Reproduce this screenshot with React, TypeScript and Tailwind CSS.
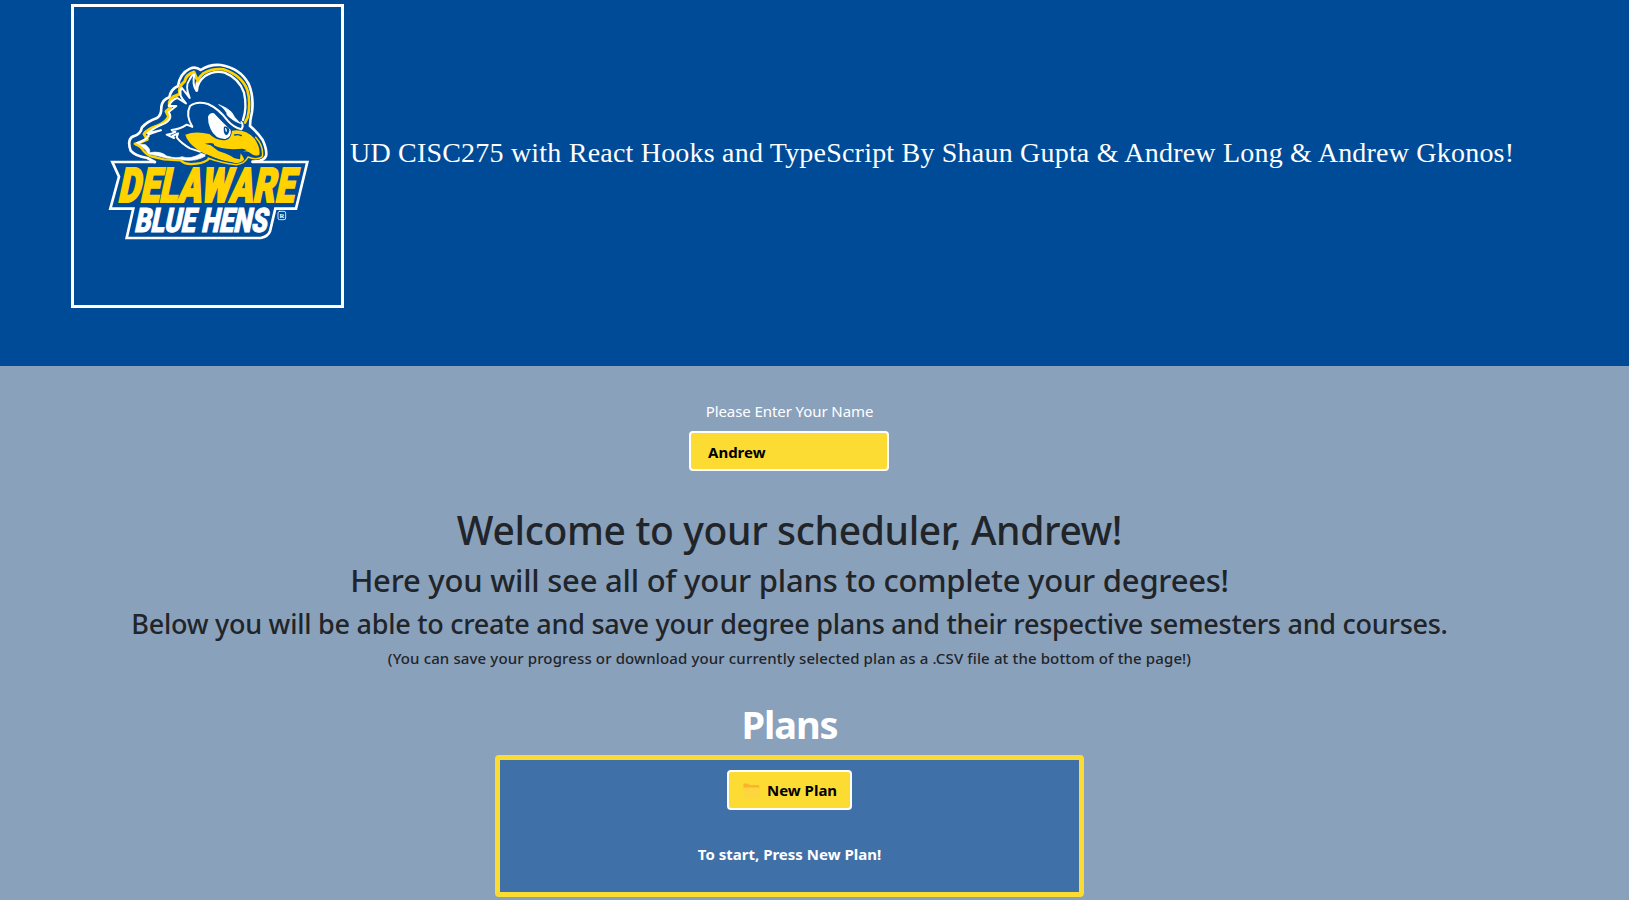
import { useState } from "react";

function Logo() {
  return (
    <svg viewBox="42 21 801 894" className="block h-full w-full overflow-visible" fill="none" strokeLinejoin="round" strokeLinecap="round">
      {/* outer contour of the head */}
      <path d="M284 486 L262 474 Q225 468 212 452 Q200 418 220 409 Q242 404 246 382 Q262 364 291 354 Q305 346 304 320 Q308 298 328 292 Q332 268 354 258 Q360 220 390 206 Q406 198 422 210 Q450 192 482 195 Q540 204 566 252 Q582 290 576 336 Q570 360 570 378 Q592 396 608 420 Q622 450 618 468 Q612 484 578 485" stroke="#fff" strokeWidth="8" />
      {/* crown */}
      <path d="M409 262 Q408 240 430 220 Q456 205 490 208 Q545 226 562 270 Q573 310 563 352 L555 368" stroke="#ffd200" strokeWidth="8" />
      <path d="M411 272 Q412 246 434 229 Q462 210 494 218 Q538 236 552 278 Q562 322 549 360" stroke="#fff" strokeWidth="7" />
      {/* feathers */}
      <path d="M228 432 L262 418 L252 402 Q262 388 291 378 Q316 368 326 350 L318 334 L332 322 Q320 308 340 290 L360 282 Q352 262 374 244 Q378 224 402 216 L410 236" stroke="#ffd200" strokeWidth="9" />
      <path d="M230 430 Q252 424 266 408 Q258 404 303 391 L262 400 Q280 384 314 370 Q340 356 326 336 L349 318 L326 318 Q336 298 352 294 L378 310 Q350 280 366 264 L389 294 Q374 258 388 240 Q398 222 403 224 Q396 252 409 272 L411 250" stroke="#fff" strokeWidth="6" />
      <path d="M226 431 L256 434 Q274 448 268 458 Q302 452 320 468 Q350 477 366 470 Q390 480 424 460 L440 466 Q410 486 368 480 L318 474 Q300 468 264 462 Q258 444 226 431Z" fill="#fff" stroke="#fff" strokeWidth="2" />
      <path d="M224 431 Q246 442 250 452 Q264 468 282 471 L312 478 L362 481 Q374 496 410 491 Q436 488 450 474" stroke="#ffd200" strokeWidth="7" />
      {/* cheek */}
      <path d="M396 380 L380 374 Q360 388 335 390 L346 396 Q336 402 320 404 L342 414 L338 408 L354 400 L350 412 Q364 430 390 445 L420 455" stroke="#fff" strokeWidth="6" />
      {/* brow and eye */}
      <path d="M397 380 Q376 346 390 318 Q410 302 444 312 Q476 326 503 362 Q520 382 544 388 Q552 376 544 366" stroke="#fff" strokeWidth="6" />
      <path d="M477 314 Q504 324 516 338 L524 352 L542 371 Q520 364 502 346 Q500 330 477 314Z" fill="#fff" stroke="#fff" strokeWidth="2" />
      <path d="M444 350 Q450 336 462 340 Q486 366 512 390 Q516 410 496 417 Q466 418 452 388 Q443 370 444 350Z" fill="#fff" />
      <path d="M492 380 Q505 378 508 391 Q506 405 498 406 Q488 397 492 380Z" fill="#004b98" />
      <path d="M497 386 L499 393" stroke="#fff" strokeWidth="4" />
      {/* beak */}
      <path d="M376 404 Q406 392 448 402 Q472 424 498 420 Q514 416 516 392 Q556 386 584 416 Q602 444 598 464 Q586 472 566 456 Q556 450 540 458 Q556 476 552 486 Q536 496 512 486 Q480 482 440 464 Q386 438 376 404Z" fill="#ffd200" />
      <path d="M434 431 Q464 426 462 436 Q478 446 520 448 L548 446 L560 450 L542 460 L540 478 Q500 476 452 436 Z" fill="#004b98" />
      <path d="M464 452 Q500 456 530 479 Q500 478 464 452Z" fill="#ffd200" />
      <path d="M524 405 Q534 402 544 407" stroke="#004b98" strokeWidth="4" />
      <path d="M440 467 Q484 488 530 494 Q556 490 562 469 Q590 482 605 470 Q612 440 587 412" stroke="#004b98" strokeWidth="8" />
      <path d="M444 474 Q484 490 530 494 Q556 490 564 471 Q590 482 607 470 Q612 440 587 412" stroke="#ffd200" strokeWidth="4.5" />
      {/* wordmark */}
      <path d="M285 486 H157 L177 530 L151 626 H220 L200 714 H602 Q624 710 630 694 L646 626 H708 L742 486 H578" stroke="#fff" strokeWidth="8" strokeLinejoin="miter" />
      <g transform="translate(172 606) skewX(-12)">
        <text x="0" y="0" textLength="528" lengthAdjust="spacingAndGlyphs" className="font-['Roboto'] text-[143px] font-black" fill="#ffd200" stroke="#ffd200" strokeWidth="6" strokeLinejoin="miter">DELAWARE</text>
      </g>
      <g transform="translate(221 695) skewX(-12)">
        <text x="0" y="0" textLength="398" lengthAdjust="spacingAndGlyphs" className="font-['Roboto'] text-[101px] font-black" fill="#fff" stroke="#fff" strokeWidth="3" strokeLinejoin="miter">BLUE HENS</text>
      </g>
      <rect x="654" y="634" width="23" height="25" rx="5" stroke="#fff" strokeWidth="2.5" />
      <text x="658.5" y="653.5" className="font-['Liberation_Serif'] text-[20px] font-bold" fill="#fff">R</text>
    </svg>
  );
}

function Folder() {
  return (
    <svg viewBox="0 0 17 15" className="h-[15px] w-[17px] shrink-0">
      <path d="M.5 1.5Q.5.5 1.5.5H5l1.6 1.4H15q1.3 0 1.3 1.2V5.5H.5Z" fill="#ffb02e" />
      <rect x=".5" y="4.6" width="15.8" height="10" rx="1" fill="#fcd53f" />
    </svg>
  );
}

export default function App() {
  const [name, setName] = useState("Andrew");
  return (
    <div className="flex h-[900px] w-full flex-col overflow-hidden bg-[#8aa1bc] font-['Noto_Sans',sans-serif] text-[#212529]">
      <header className="flex h-[366px] shrink-0 items-start bg-[#004b98] pt-1 pl-[71px]">
        <div className="h-[304px] w-[273px] shrink-0 border-[3px] border-white">
          <Logo />
        </div>
        <div className="mt-[128px] ml-[6px] whitespace-nowrap font-['Liberation_Serif',serif] text-[28px] leading-[42px] tracking-[0.205px] text-white">
          UD CISC275 with React Hooks and TypeScript By Shaun Gupta &amp; Andrew Long &amp; Andrew Gkonos!
        </div>
      </header>
      <main className="flex w-[1579px] flex-col items-center whitespace-nowrap">
        <label className="mt-[33px] text-[15px] leading-6 tracking-[-0.08px] text-white">Please Enter Your Name</label>
        <input
          className="mt-2 mr-px h-10 w-[200px] rounded border-2 border-white bg-[#fcdb32] px-[17px] pt-px text-[15px] font-bold text-black outline-none"
          value={name}
          onChange={(e) => setName(e.target.value)}
        />
        <h1 className="mt-[35px] text-[39px] leading-[48px] font-medium tracking-[-0.34px]">Welcome to your scheduler, {name}!</h1>
        <h2 className="mt-[7px] text-[31px] leading-[38px] font-medium tracking-[-0.23px]">Here you will see all of your plans to complete your degrees!</h2>
        <h3 className="mt-2 text-[27px] leading-[34px] font-medium tracking-[-0.26px]">
          Below you will be able to create and save your degree plans and their respective semesters and courses.
        </h3>
        <h6 className="mt-[7px] text-[15px] leading-5 font-medium tracking-[0.13px]">
          (You can save your progress or download your currently selected plan as a .CSV file at the bottom of the page!)
        </h6>
        <h1 className="mt-8 text-[38px] leading-[48px] font-bold tracking-[-1.1px] text-white">Plans</h1>
        <section className="mt-[7px] flex h-[142px] w-[589px] flex-col items-center rounded border-5 border-[#fcdb32] bg-[#3f70a7] pt-[10px]">
          <button className="flex h-10 w-[125px] items-center rounded border-2 border-white bg-[#fcdb32] pl-[14px] text-[15px] font-bold text-black">
            <Folder />
            <span className="ml-[7px] pt-px">New Plan</span>
          </button>
          <p className="mt-8 text-[15px] leading-6 font-bold text-white">To start, Press New Plan!</p>
        </section>
      </main>
    </div>
  );
}
